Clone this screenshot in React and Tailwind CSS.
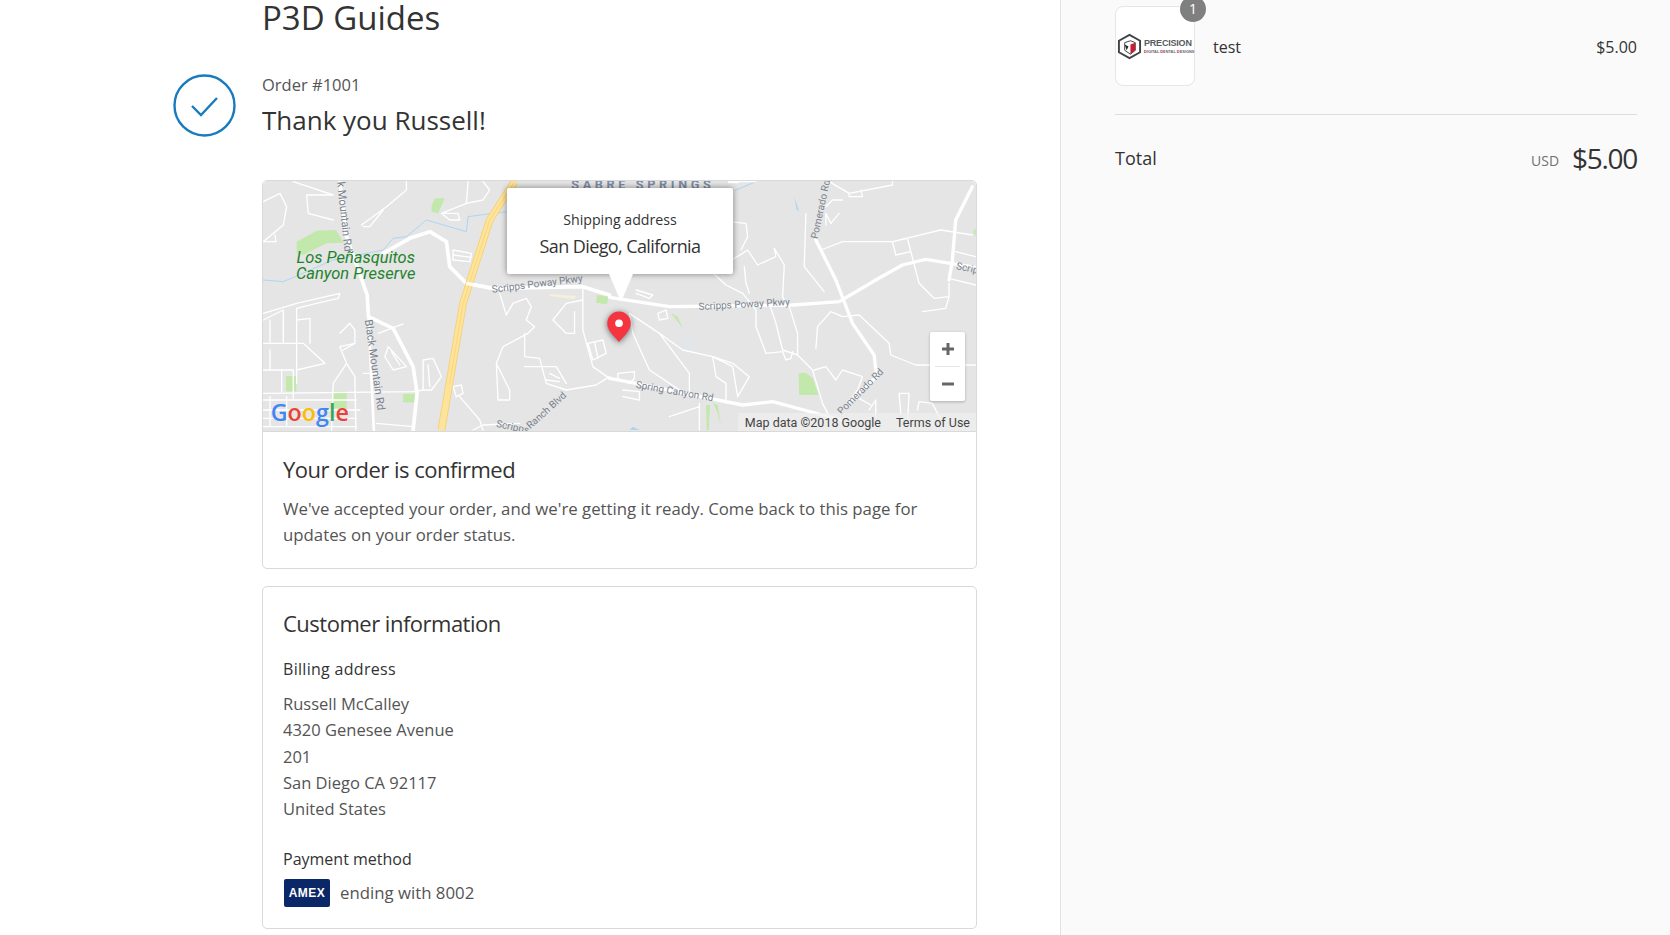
import React from "react";

// Roads are written in the coordinates of 3x crops of the map, hence the scale on the groups
const westMinor = [
  "M40 95 L90 70 L110 110 L100 165 L40 215 L78 215 L75 195",
  "M130 35 L250 75 L170 75 L175 130 L250 150",
  "M335 165 L410 110 L470 60 L470 35 M340 170 L360 170 L400 120",
  "M575 130 L650 100 L655 35 M575 130 L600 150 L630 150 L625 130 L575 130 M650 100 L700 90 L720 60 L700 35",
  "M610 240 L665 250 L660 275 L610 270 Z M610 255 L665 262",
  "M40 430 L140 400 L270 370 L265 385 L200 400 L140 415 L140 640 M40 450 L100 420 L100 520 L40 520 M60 450 L60 520 M140 450 L180 445 L180 520 M40 520 L160 520 L225 580 L140 600 M40 600 L130 600 L130 690",
  "M40 670 L490 665 L520 660 L520 570 L550 565 L575 620 L545 660 L520 660 M535 585 L540 650",
  "M270 490 L300 460 L315 480 L315 520 L270 530 L290 580 L250 640 L245 780 M315 520 L280 540 M290 580 L315 620 L318 780",
  "M40 690 L320 690 M40 720 L330 720 M40 745 L320 745 M40 770 L320 770 M60 680 L60 770 M110 680 L110 770 M60 540 L60 600 M95 600 L95 665",
  "M385 490 L460 462 M415 530 L470 590 L430 600 L405 560 Z M425 545 L450 585",
  "M340 610 L385 610 L385 660 M380 760 L490 770",
  "M610 650 L635 645 L640 670 L620 680 Z M630 680 L690 750 L700 780",
  "M750 370 L770 435 L790 400 L830 385 L845 410 L830 450 L855 470 L835 490 L760 530 L740 580 L780 660 L780 690 L745 690 L740 580 M825 490 L825 560 L870 565 L890 640 L950 660 M825 590 L880 590 L920 590 L950 640 M890 630 L930 635 M900 610 L930 625",
  "M1000 350 L1000 480 L1030 590 L1080 625 M1000 390 L950 400 L910 450 L950 490 L975 490 L975 425 M1015 520 L1060 510 L1070 550 L1030 570 Z M1035 515 L1045 565",
  "M950 660 L1040 645 L1080 620 M670 780 L700 765 L810 760",
];
const eastMinor = [
  "M385 35 L440 35 M400 250 L300 310 M290 290 L350 345 L400 370 L440 420 L440 470 L470 550 M400 250 L415 240 L445 285 L500 260 L495 235 L525 285 L520 380 L530 400 M405 290 L410 340 L420 370 M360 155 L410 160 L415 200 L395 240 M310 110 L360 155",
  "M590 130 L585 290 L645 365 M635 240 L700 215 L850 215 L995 180 L1090 195 M850 215 L895 205 L905 245 L860 255 Z M895 205 L930 340 L975 385 L1020 380 L1010 415 L940 425 M1040 245 L1100 260 M1020 325 L1100 345 M1020 340 L1020 380",
  "M660 35 L720 70 L850 45 L850 35 M720 70 L720 80 L760 80 L755 60 M650 110 L670 90 L700 90 M650 165 L650 130 L665 160 L690 130",
  "M480 400 L500 460 L520 540 L565 555 L610 600 L640 700 L660 740 M540 410 L565 490 L565 555 M470 550 L520 545 L530 570 L545 565 L550 545 M615 600 L650 590 L680 630 L700 600 L760 620 L745 660 L730 680 L750 685 L785 705",
  "M620 535 L625 470 L665 425 L700 440 L750 435 L840 520 L845 555 L920 585 L1100 585",
  "M60 430 L150 490 L240 610 L240 680 M150 490 L220 540 L310 560 L370 580 L420 620 L385 680 L370 590 L310 560 M310 560 L320 620 L350 640 L350 700 M60 430 L70 490 L120 600 L240 680",
  "M25 610 L75 605 L75 625 L60 640 L25 625 Z M40 660 L90 665 L90 690 L40 680",
  "M80 360 L130 375 L120 385 L80 370 M145 430 L170 420 L175 445 L150 450 Z",
  "M270 700 L270 780 M180 740 L270 710 M875 730 L870 670 L900 670 L895 760 M925 720 L930 695 L970 700 L995 750 M780 720 L800 690 L800 740",
];

const MapDrawing = () => (
  <svg viewBox="0 0 714 250" preserveAspectRatio="none" className="block w-full h-full" fontFamily="Roboto, sans-serif">
    <rect width="714" height="250" fill="#e5e5e5" />
    <g transform="translate(-13 -11) scale(0.33333)" fill="none" strokeLinejoin="round" strokeLinecap="round">
      <path d="M40 330 L100 335 L250 270 L400 240 L430 205 L470 200 L530 150 L650 185 L655 140 L770 125" stroke="#a9d6f3" strokeWidth="3" />
      <g fill="#c3e8ab" stroke="none">
        <path d="M140 215 L200 182 L258 180 L282 218 L230 220 L160 255 L140 250 Z" />
        <path d="M545 110 L555 85 L585 85 L565 130 L545 125 Z" />
        <rect x="108" y="618" width="31" height="46" />
        <rect x="250" y="665" width="40" height="50" />
        <rect x="460" y="672" width="35" height="25" />
      </g>
      <g stroke="#ffffff" strokeWidth="4">
        {westMinor.map((d) => (
          <path key={d} d={d} />
        ))}
      </g>
      <g stroke="#ffffff" strokeWidth="11">
        <path d="M270 35 L290 200 L352 375 L356 440 L430 475 L490 590 L502 670 L490 780" />
        <path d="M400 250 L480 205 L540 185 L590 215 L600 290 L650 340 L730 355 L1000 350 L1080 375" />
        <path d="M356 440 L372 780" strokeWidth="8" />
      </g>
      <path d="M795 35 L720 150 L640 400 L575 780" stroke="#f5d06f" strokeWidth="23" strokeLinecap="butt" />
      <path d="M795 35 L720 150 L640 400 L575 780" stroke="#fee39a" strokeWidth="18" strokeLinecap="butt" />
      <path d="M795 35 L720 150 L640 400 L600 640" stroke="#f5d06f" strokeWidth="2" />
      <path d="M650 340 L730 355" stroke="#ffffff" strokeWidth="10" strokeLinecap="butt" />
      <path d="M900 372 L980 378 L975 388 L900 378 Z" fill="#f6efd9" />
      <path d="M1042 375 L1078 380 L1072 403 L1040 398 Z" fill="#c3e8ab" />
      <g fontSize="33" fill="#7a838f" stroke="none">
        <text transform="translate(262 36) rotate(84)">k Mountain Rd</text>
        <text transform="translate(345 450) rotate(82)">Black Mountain Rd</text>
        <text transform="translate(728 368) rotate(-7)" fontSize="30">Scripps Poway Pkwy</text>
        <text transform="translate(738 770) rotate(12)" fontSize="30">Scripps</text>
        <text transform="translate(842 778) rotate(-42)" fontSize="30">Ranch Blvd</text>
      </g>
      <g fontSize="49.5" fontStyle="italic" fill="#22842a" stroke="none">
        <text x="140" y="280">Los Peñasquitos</text>
        <text x="138" y="328">Canyon Preserve</text>
      </g>
      <text x="62" y="752" fontSize="70" fontWeight="600" stroke="none" fontFamily="'Open Sans', sans-serif">
        <tspan fill="#4285f4">G</tspan>
        <tspan fill="#ea4335">o</tspan>
        <tspan fill="#fbbc05">o</tspan>
        <tspan fill="#4285f4">g</tspan>
        <tspan fill="#34a853">l</tspan>
        <tspan fill="#ea4335">e</tspan>
      </text>
      <text x="965" y="58" fontSize="38" fontWeight="700" letterSpacing="11" fill="#7c8ba6" stroke="none">SABRE SPRINGS</text>
    </g>
    <g transform="translate(347 -11) scale(0.33333)" fill="none" strokeLinejoin="round" strokeLinecap="round">
      <g fill="#c3e8ab" stroke="none">
        <path d="M568 610 L590 608 L610 625 L628 675 L570 675 Z" />
        <path d="M185 430 L205 440 L220 475 Z" />
        <path d="M290 705 L302 705 L298 780 L292 780 Z M312 700 L325 705 L335 770 L325 730 Z" />
        <path d="M1092 185 L1100 175 L1100 198 Z" />
      </g>
      <path d="M555 80 L570 125 L562 118 Z" fill="#a9d6f3" />
      <path d="M375 62 L440 35" stroke="#a9d6f3" strokeWidth="3" />
      <rect x="215" y="505" width="35" height="40" rx="14" fill="#e0e6ea" />
      <path d="M60 780 L70 770 L90 780 Z" fill="#a9d6f3" />
      <g stroke="#ffffff" strokeWidth="4">
        {eastMinor.map((d) => (
          <path key={d} d={d} />
        ))}
      </g>
      <g stroke="#ffffff" strokeWidth="10">
        <path d="M0 382 L180 410 L550 405 L690 395 L800 330 L880 285 L950 268 L1100 292" />
        <path d="M620 210 L680 330 L730 460 L795 555 L802 620 L720 695" />
        <path d="M1090 50 L1040 150 L1030 270 L1020 330" />
        <path d="M0 625 L80 640 L300 685 L400 705 L490 695 L640 735 L700 752" />
        <path d="M360 35 L385 35" />
      </g>
      <g fontSize="30" fill="#7a838f" stroke="none">
        <text transform="translate(268 420) rotate(-3)">Scripps Poway Pkwy</text>
        <text transform="translate(1040 297) rotate(12)">Scrip</text>
        <text transform="translate(78 653) rotate(10)">Spring Canyon Rd</text>
        <text transform="translate(625 208) rotate(-78)">Pomerado Rd</text>
        <text transform="translate(697 735) rotate(-45)">Pomerado Rd</text>
      </g>
    </g>
  </svg>
);

const MapPin = () => (
  <svg viewBox="0 0 24 30" className="w-[26px] h-[32px]" style={{ filter: "drop-shadow(0 1px 3px rgba(0,0,0,0.55))" }}>
    <path d="M12 29 C8 24 1 19 1 11.5 A11 11 0 0 1 23 11.5 C23 19 16 24 12 29 Z" fill="#f4343f" />
    <circle cx="12" cy="11.5" r="3.6" fill="#ffffff" />
  </svg>
);

const BrandLogo = () => (
  <div className="-ml-[3px] flex items-center gap-[2px]">
    <svg viewBox="0 0 26 28" className="w-[25px] h-[27px] shrink-0">
      <path d="M13 2 L24 8 L24 20 L13 26 L2 20 L2 8 Z" fill="none" stroke="#3f4448" strokeWidth="2" />
      <path d="M8 10 L14 8 L19 10 L19 18 L14 22 L8 18 Z" fill="#ffffff" stroke="#3f4448" strokeWidth="1" />
      <path d="M14 12 L19 10 L19 18 L14 22 Z" fill="#c5202d" />
      <path d="M8 12 L12 14 L10 18 Z" fill="#26282a" />
    </svg>
    <div className="flex w-[46px] flex-col font-['Liberation_Sans',sans-serif] leading-none">
      <span className="text-[9px] font-bold tracking-[-0.2px] text-[#555b60]">PRECISION</span>
      <span className="mt-[2px] whitespace-nowrap text-[3.9px] font-bold text-[#6b6468]">
        <span className="text-[#c5202d]">D</span>IGITAL <span className="text-[#c5202d]">D</span>ENTAL <span className="text-[#c5202d]">D</span>ESIGNS
      </span>
    </div>
  </div>
);

const App = () => {
  return (
    <div className="flex h-[935px] w-full overflow-hidden bg-white font-['Open_Sans',sans-serif] text-[#333333]">
      <main className="w-[1061px] shrink-0 border-r border-[#e1e1e1] pl-[173px]">
        <h1 className="ml-[89px] h-[74px] text-[33px] leading-[36px] text-[#333333]">P3D Guides</h1>

        <div className="flex items-start gap-[26px]">
          <svg viewBox="0 0 63 63" className="w-[63px] h-[63px] shrink-0">
            <circle cx="31.5" cy="31.5" r="30" fill="none" stroke="#197bbd" strokeWidth="2.4" />
            <path d="M19 32 L28 41 L44 24" fill="none" stroke="#197bbd" strokeWidth="2.4" />
          </svg>
          <div className="flex flex-col">
            <span className="text-[16.5px] leading-[24px] -mt-[1px] text-[#545454]">Order #1001</span>
            <span className="mt-[6px] text-[26px] leading-[34px]">Thank you Russell!</span>
          </div>
        </div>

        <section className="ml-[89px] mt-[43px] w-[715px] rounded-[5px] border border-[#d9d9d9]">
          <div className="relative h-[251px] overflow-hidden rounded-t-[5px] border-b border-[#d9d9d9]">
            <MapDrawing />

            <div className="absolute left-[244px] top-[7px] flex h-[86px] w-[226px] flex-col items-center justify-center rounded-[2px] bg-white pt-[6px] shadow-[0_0_6px_rgba(0,0,0,0.45)]">
              <span className="text-[14.2px] leading-[20px]">Shipping address</span>
              <span className="mt-[3px] text-[18px] leading-[26px] tracking-[-0.6px]">San Diego, California</span>
            </div>
            <div className="absolute left-[346px] top-[93px] h-0 w-0 border-x-[12px] border-t-[28px] border-x-transparent border-t-white" />
            <div className="absolute left-[343px] top-[130px]">
              <MapPin />
            </div>

            <div className="absolute left-[667px] top-[151px] flex h-[69px] w-[35px] flex-col rounded-[2px] bg-white shadow-[0_1px_3px_rgba(0,0,0,0.25)]">
              <div className="flex flex-1 items-center justify-center text-[#666666]">
                <svg viewBox="0 0 14 14" className="w-[14px] h-[14px]">
                  <path d="M7 1 V13 M1 7 H13" stroke="currentColor" strokeWidth="3" fill="none" />
                </svg>
              </div>
              <div className="mx-[5px] h-px bg-[#e6e6e6]" />
              <div className="flex flex-1 items-center justify-center text-[#666666]">
                <svg viewBox="0 0 14 14" className="w-[14px] h-[14px]">
                  <path d="M1 7 H13" stroke="currentColor" strokeWidth="3" fill="none" />
                </svg>
              </div>
            </div>

            <div className="absolute bottom-0 right-0 flex h-[18px] items-center gap-[15px] bg-[#f0f0f0]/70 pl-[7px] pr-[6px] pt-[3px] font-['Roboto',sans-serif] text-[12.5px] leading-none text-[#444444]">
              <span>Map data ©2018 Google</span>
              <span>Terms of Use</span>
            </div>
          </div>

          <div className="px-[20px] pt-[22px] pb-[20px]">
            <h2 className="text-[22px] leading-[30px] tracking-[-0.5px]">Your order is confirmed</h2>
            <p className="mt-[12px] text-[16.8px] leading-[26px] text-[#545454]">
              We've accepted your order, and we're getting it ready. Come back to this page for updates on your order status.
            </p>
          </div>
        </section>

        <section className="ml-[89px] mt-[17px] w-[715px] rounded-[5px] border border-[#d9d9d9] px-[20px] pt-[21px] pb-[21px]">
          <h2 className="text-[22px] leading-[30px] tracking-[-0.5px]">Customer information</h2>
          <h3 className="mt-[18px] text-[16px] leading-[26px] tracking-[0.3px]">Billing address</h3>
          <address className="mt-[9px] text-[16.5px] leading-[26.25px] text-[#545454] not-italic">
            <div>Russell McCalley</div>
            <div>4320 Genesee Avenue</div>
            <div>201</div>
            <div>San Diego CA 92117</div>
            <div>United States</div>
          </address>
          <h3 className="mt-[24px] text-[16px] leading-[26px]">Payment method</h3>
          <div className="ml-[1px] mt-[7px] flex items-center gap-[10px]">
            <div className="flex h-[28px] w-[46px] items-center justify-center rounded-[2px] bg-[#0a2767]">
              <span className="font-['Liberation_Sans',sans-serif] text-[12px] font-bold leading-none tracking-[0.5px] text-white">AMEX</span>
            </div>
            <span className="text-[16.8px] leading-[26px] text-[#545454]">ending with 8002</span>
          </div>
        </section>
      </main>

      <aside className="flex-1 bg-[#fafafa] pl-[54px] pr-[33px]">
        <div className="flex h-[115px] items-start border-b border-[#dcdcdc]">
          <div className="relative mt-[6px] flex h-[80px] w-[80px] shrink-0 items-center justify-center rounded-[8px] border border-[#e6e6e6] bg-white">
            <BrandLogo />
            <span className="absolute -right-[12px] -top-[11px] flex h-[26px] w-[26px] items-center justify-center rounded-full bg-[#7f7f7f] text-[14px] leading-none text-white">1</span>
          </div>
          <span className="ml-[18px] mt-[34px] text-[16px] leading-[26px]">test</span>
          <span className="ml-auto mt-[34px] text-[16px] leading-[26px]">$5.00</span>
        </div>
        <div className="mt-[23px] flex items-center justify-between">
          <span className="text-[18px] leading-[40px]">Total</span>
          <div className="flex items-center gap-[13px]">
            <span className="mt-[4px] text-[14px] text-[#717171]">USD</span>
            <span className="text-[28px] leading-[40px] tracking-[-1.3px]">$5.00</span>
          </div>
        </div>
      </aside>
    </div>
  );
};

export default App;
